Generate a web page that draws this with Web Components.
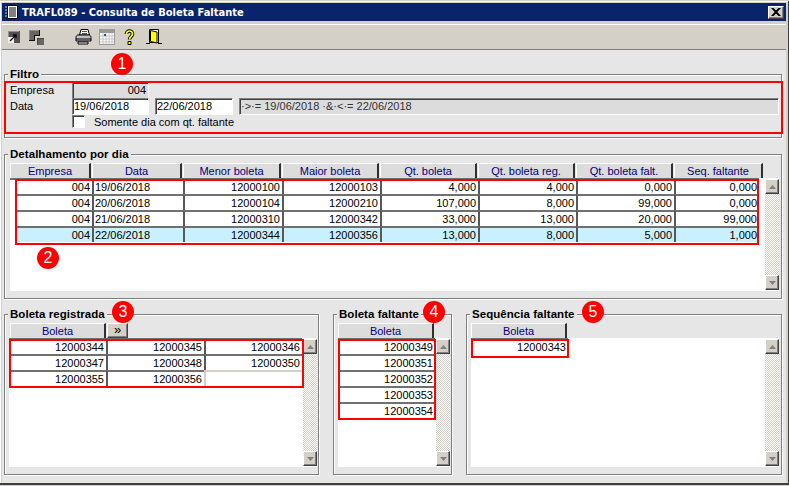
<!DOCTYPE html>
<html>
<head>
<meta charset="utf-8">
<style>
html, body { margin: 0; padding: 0; }
body { width: 789px; height: 486px; overflow: hidden; background: #d4d0c8; font: 11px "Liberation Sans", Arial, sans-serif; color: #000; }
.bottom { display: flex; gap: 14px; margin-top: 15px; height: 161px; }
.bottom group-box { height: 161px; }
</style>
</head>
<body>
<trafl-window>
	<trafl-filter></trafl-filter>
	<group-box title="Detalhamento por dia" style="margin-top: 16px; height: 145px">
		<data-grid id="detail" columns="82,91,99,98,98,98,98,90" cellcolumns="82,91,99,98,98,98,98,85" headers="Empresa,Data,Menor boleta,Maior boleta,Qt. boleta,Qt. boleta reg.,Qt. boleta falt.,Seq. faltante" highlight="3" gridheight="113"></data-grid>
	</group-box>
	<div class="bottom">
		<group-box title="Boleta registrada" style="width: 315px; padding-right: 1px">
			<data-grid id="reg" columns="97,98,98" headers="Boleta" more gridheight="129" pad="-1"></data-grid>
		</group-box>
		<group-box title="Boleta faltante" style="width: 119px; padding-left: 4px; padding-right: 1px">
			<data-grid id="falt" columns="97" headers="Boleta" gridheight="129"></data-grid>
		</group-box>
		<group-box title="Sequência faltante" style="width: 316px; padding-left: 4px">
			<data-grid id="seq" columns="97" headers="Boleta" gridheight="129"></data-grid>
		</group-box>
	</div>
	<red-mark x="4" y="80" w="779" h="53"></red-mark>
	<red-mark x="15" y="178" w="744" h="66"></red-mark>
	<red-mark x="9" y="338" w="295" h="49"></red-mark>
	<red-mark x="338" y="338" w="98" h="81"></red-mark>
	<red-mark x="471" y="338" w="98" h="19"></red-mark>
	<num-badge n="1" x="111" y="52"></num-badge>
	<num-badge n="2" x="37" y="246"></num-badge>
	<num-badge n="3" x="112" y="300"></num-badge>
	<num-badge n="4" x="423" y="300"></num-badge>
	<num-badge n="5" x="582" y="300"></num-badge>
</trafl-window>

<script>
const raised = 'border: 1px solid; border-color: #fff #404040 #404040 #fff; box-shadow: inset -1px -1px 0 #808080;';

class TraflWindow extends HTMLElement {
	constructor() {
		super();
		this.attachShadow({ mode: 'open' });
		this.shadowRoot.innerHTML = `
			<style>
				:host { display: flex; flex-direction: column; position: relative; width: 789px; height: 486px; box-sizing: border-box; background: #d4d0c8; border-top: 1px solid #d4d0c8; }
				.frame { display: flex; flex-direction: column; flex: 1; border-bottom: 2px solid #404040; border-right: 1px solid #404040; margin-bottom: 1px; padding: 2px 2px 0 2px; min-height: 0; box-shadow: inset 1px 1px 0 #fff; }
				.title { display: flex; align-items: center; height: 18px; flex: none; background: #0a246a; color: #fff; padding: 0 2px; gap: 2px; font: bold 11px "DejaVu Sans Condensed", "DejaVu Sans", Verdana, sans-serif; font-stretch: condensed; }
				.title span { flex: 1; white-space: nowrap; }
				.close { width: 16px; height: 13px; box-sizing: border-box; background: #d4d0c8; ${raised} display: flex; align-items: center; justify-content: center; }
				.tools { display: flex; align-items: center; flex: none; height: 24px; margin-top: 3px; border-top: 1px solid #fff; border-bottom: 1px solid #808080; padding: 0 0 0 5px; }
				.tools svg { display: block; flex: none; }
				.body { flex: 1; display: flex; flex-direction: column; background: #e6e6e6; padding: 24px 4px 0 2px; min-height: 0; }
			</style>
			<div class="frame">
				<div class="title">
					<svg width="16" height="16" viewBox="0 0 16 16"><path d="M3.500 1.500h10v13h-10z" fill="#fff" stroke="#000"/><path d="M5 4h7M5 6h7M5 8h7M5 10h7M5 12h7" stroke="#000"/><path d="M1 3h2M1 6h2M1 9h2M1 12h2" stroke="#c8c8c8"/></svg>
					<span>TRAFL089 - Consulta de Boleta Faltante</span>
					<div class="close"><svg width="10" height="8" viewBox="0 0 10 8"><path d="M0 0h2.500L5 2.500 7.500 0H10L6.300 4 10 8H7.500L5 5.500 2.500 8H0l3.700-4z" fill="#000"/></svg></div>
				</div>
				<div class="tools">
					<svg width="12" height="12" viewBox="0 0 12 12" style="margin-left:1px"><path d="M0 0h12v12H0z" fill="#505050"/><path d="M0 0h11v1H1v5H0z" fill="#909090"/><path d="M0 12V6h6v6z" fill="#f0f0f0"/><path d="M2 10l6-6M5 4h3v3" stroke="#000" stroke-width="1.300" fill="none"/></svg>
					<svg width="15" height="15" viewBox="0 0 15 15" style="margin-left:9px"><path d="M0 0h10v5H5v5H0z" fill="#666"/><path d="M0 0h10v1H1v9H0z" fill="#8c8c8c"/><path d="M5 5h5V0h1v6H6v5H0v-1h5z" fill="#111"/><path d="M8 8h7v7H8z" fill="#666"/><path d="M8 8h7v1H9v6H8z" fill="#444"/></svg>
					<svg width="17" height="16" viewBox="0 0 17 16" style="margin-left:31px"><path d="M6 .5h7l1.500 5.500H4.500z" fill="#fff" stroke="#000"/><path d="M1 8.500C1 7 2 6 3 6h11c1 0 2 1 2 2.500V12H1z" fill="#c0c0c0" stroke="#000"/><path d="M1 10h15" stroke="#000"/><path d="M3 13h10v2H3z" fill="#fff" stroke="#000"/><path d="M7 2.500h5M7 4.500h5" stroke="#555"/></svg>
					<svg width="16" height="16" viewBox="0 0 16 16" style="margin-left:7px"><path d="M0 0h16v16H0z" fill="#9a9a9a"/><path d="M1 4h14v11H1z" fill="#fff"/><path d="M1 7h14M1 10h14M1 13h14M4 4v11M7 4v11M10 4v11M13 4v11" stroke="#c4c4c4"/><path d="M5 5h2v2H5z" fill="#0a5aa0"/></svg>
					<svg width="11" height="16" viewBox="0 0 11 16" style="margin-left:9px"><path d="M2.500 5c0-4 6-4 6 0 0 2.500-3 2.500-3 5.500" fill="none" stroke="#000" stroke-width="3.600"/><path d="M2.500 5c0-4 6-4 6 0 0 2.500-3 2.500-3 5.500" fill="none" stroke="#ffff00" stroke-width="1.700"/><path d="M4 12.500h3v3H4z" fill="#ffff00" stroke="#000"/></svg>
					<svg width="16" height="16" viewBox="0 0 16 16" style="margin-left:11px"><path d="M3.500 .5h9v13h-9z" fill="#fff" stroke="#000"/><path d="M4.500 1.500l6.500 1.500v11l-6.500-1.500z" fill="#ffff00" stroke="#000"/><path d="M12 1h1v13h-1z" fill="#000"/><path d="M0 14.500h4M12 14.500h4" stroke="#000"/></svg>
				</div>
				<div class="body"><slot></slot></div>
			</div>
		`;
	}
}

class GroupBox extends HTMLElement {
	constructor() {
		super();
		this.attachShadow({ mode: 'open' });
		const title = this.getAttribute('title');
		this.removeAttribute('title');
		this.shadowRoot.innerHTML = `
			<style>
				:host { display: block; position: relative; box-sizing: border-box; flex: none; border: 1px solid #808080; box-shadow: 1px 1px 0 #fff, inset 1px 1px 0 #fff; padding: 8px 2px 0 5px; }
				.legend { position: absolute; left: 3px; top: -8px; background: #e6e6e6; padding: 0 2px; font: bold 11.5px/14px "Liberation Sans", Arial, sans-serif; letter-spacing: 0.05px; white-space: nowrap; }
			</style>
			<div class="legend">${title}</div>
			<slot></slot>
		`;
	}
}

class TraflFilter extends HTMLElement {
	constructor() {
		super();
		this.attachShadow({ mode: 'open' });
		const sunken = 'box-sizing: border-box; height: 17px; flex: none; border: 1px solid; border-color: #808080 #fff #fff #808080; box-shadow: inset 1px 1px 0 #404040; line-height: 15px; padding: 0 2px 0 1px;';
		this.shadowRoot.innerHTML = `
			<style>
				:host { display: block; flex: none; }
				.row { display: flex; align-items: center; height: 16px; }
				.label { width: 62px; flex: none; }
				.box { ${sunken} width: 77px; background: #fff; }
				.gray { background: #dcdcdc; text-align: right; }
				.date2 { margin-left: 6px; width: 78px; }
				.range { ${sunken} margin-left: 6px; width: 540px; background: #dcdcdc; color: #333; }
				.check { width: 13px; height: 13px; box-sizing: border-box; margin-left: 62px; background: #fff; border: 1px solid; border-color: #808080 #fff #fff #808080; box-shadow: inset 1px 1px 0 #404040; }
				.cklabel { margin-left: 9px; }
			</style>
			<group-box title="Filtro" style="height: 64px; padding-top: 7px">
				<div class="row"><div class="label">Empresa</div><div class="box gray">004</div></div>
				<div class="row"><div class="label">Data</div><div class="box">19/06/2018</div><div class="box date2">22/06/2018</div><div class="range">·&gt;·= 19/06/2018 ·&amp;·&lt;·= 22/06/2018</div></div>
				<div class="row" style="height:15px"><div class="check"></div><div class="cklabel">Somente dia com qt. faltante</div></div>
			</group-box>
		`;
	}
}

class ScrollBar extends HTMLElement {
	constructor() {
		super();
		this.attachShadow({ mode: 'open' });
		this.shadowRoot.innerHTML = `
			<style>
				:host { display: flex; flex-direction: column; justify-content: space-between; width: 14px; flex: none; margin: 1px 0;
					background: repeating-conic-gradient(#d4d0c8 0 25%, #fff 0 50%) 0 0 / 2px 2px; }
				.b { width: 14px; height: 15px; box-sizing: border-box; flex: none; background: #d4d0c8; ${raised} display: flex; align-items: center; justify-content: center; }
			</style>
			<div class="b"><svg width="7" height="4"><path d="M3.500 0L7 4H0z" fill="#808080"/></svg></div>
			<div class="b"><svg width="7" height="4"><path d="M0 0h7L3.500 4z" fill="#808080"/></svg></div>
		`;
	}
}

class DataGrid extends HTMLElement {
	constructor() {
		super();
		this.attachShadow({ mode: 'open' });
		this.colw = this.getAttribute('columns').split(',').map(Number);
		this.heads = this.getAttribute('headers').split(',');
		this.rows = [];
	}
	
	set data(rows) {
		this.rows = rows;
		this.render();
	}
	
	render() {
		const high = Number(this.getAttribute('highlight') ?? -1);
		const tpl = (this.getAttribute('cellcolumns') || this.colw.join(',')).split(',').map(w => w + 'px').join(' ');
		const head = this.heads.map((h, i) => `<div class="h" style="width:${this.colw[i] - 1}px">${h}</div>`).join('')
			+ (this.hasAttribute('more') ? '<div class="more">»</div>' : '');
		const isDetail = this.id === 'detail';
		const rows = this.rows.map((row, r) => row.map((c, i) => {
			const empty = c === '';
			return `<div class="c${r === high ? ' hi' : ''}${empty ? ' e' : ''}${i === 1 && isDetail ? ' l' : ''}${i === 0 && isDetail && r > 0 ? ' inset' : ''}${i === 0 && isDetail ? ' first' : ''}">${c}</div>`;
		}).join('')).join('');
		this.shadowRoot.innerHTML = `
			<style>
				:host { display: block; }
				.head { display: flex; gap: 1px; height: 15px; }
				.h { box-sizing: border-box; height: 15px; flex: none; background: #dcdcdc; color: #000080; text-align: center; line-height: 14px; border-right: 2px solid #303030; border-top: 1px solid #fff; border-left: 1px solid #fff; }
				.more { box-sizing: border-box; width: 21px; height: 15px; background: #d4d0c8; ${raised} text-align: center; line-height: 11px; font-size: 13px; }
				.wrap { display: flex; height: ${this.getAttribute('gridheight')}px; background: #fff; margin-left: ${this.getAttribute('pad') || 0}px; }
				.area { flex: 1; min-width: 0; }
				.cells { display: grid; grid-template-columns: ${tpl}; grid-auto-rows: 16px; }
				.c { box-sizing: border-box; border-top: 2px solid #707070; border-left: 2px solid #585858; text-align: right; padding: 0 2px 0 0; line-height: 14px; background: #fff; white-space: nowrap; overflow: hidden; }
				.c.l { text-align: left; padding-left: 1px; }
				.c.hi { background: #c9f0ff; }
				.c.e { border-color: #d4d0c8; }
				.c.first { border-left: 0; }
				.c.inset { border-top: 0; padding-top: 2px; background: linear-gradient(#707070 0 0) 5px 0 / 100% 2px no-repeat, linear-gradient(90deg, #fff 5px, transparent 5px), #fff; }
				.c.inset.hi { background: linear-gradient(#707070 0 0) 5px 0 / 100% 2px no-repeat, linear-gradient(90deg, #fff 5px, transparent 5px), #c9f0ff; }
			</style>
			<div class="head">${head}</div>
			<div class="wrap"><div class="area"><div class="cells">${rows}</div></div><scroll-bar></scroll-bar></div>
		`;
	}
}

class RedMark extends HTMLElement {
	constructor() {
		super();
		this.attachShadow({ mode: 'open' });
		const [x, y, w, h] = ['x', 'y', 'w', 'h'].map(a => this.getAttribute(a));
		this.shadowRoot.innerHTML = `<style>:host { position: absolute; left: ${x}px; top: ${y}px; width: ${w}px; height: ${h}px; box-sizing: border-box; border: 2px solid #ff0000; pointer-events: none; }</style>`;
	}
}

class NumBadge extends HTMLElement {
	constructor() {
		super();
		this.attachShadow({ mode: 'open' });
		this.shadowRoot.innerHTML = `
			<style>
				:host { position: absolute; left: ${this.getAttribute('x')}px; top: ${this.getAttribute('y')}px; width: 22px; height: 22px; border-radius: 50%; background: #ff0000; color: #fff; text-align: center; font: 16px/22px "Liberation Sans", Arial, sans-serif; }
			</style>${this.getAttribute('n')}
		`;
	}
}

customElements.define('group-box', GroupBox);
customElements.define('scroll-bar', ScrollBar);
customElements.define('data-grid', DataGrid);
customElements.define('trafl-filter', TraflFilter);
customElements.define('trafl-window', TraflWindow);
customElements.define('red-mark', RedMark);
customElements.define('num-badge', NumBadge);

document.getElementById('detail').data = [
	['004', '19/06/2018', '12000100', '12000103', '4,000', '4,000', '0,000', '0,000'],
	['004', '20/06/2018', '12000104', '12000210', '107,000', '8,000', '99,000', '0,000'],
	['004', '21/06/2018', '12000310', '12000342', '33,000', '13,000', '20,000', '99,000'],
	['004', '22/06/2018', '12000344', '12000356', '13,000', '8,000', '5,000', '1,000']
];
document.getElementById('reg').data = [
	['12000344', '12000345', '12000346'],
	['12000347', '12000348', '12000350'],
	['12000355', '12000356', '']
];
document.getElementById('falt').data = [['12000349'], ['12000351'], ['12000352'], ['12000353'], ['12000354']];
document.getElementById('seq').data = [['12000343']];
</script>
</body>
</html>
